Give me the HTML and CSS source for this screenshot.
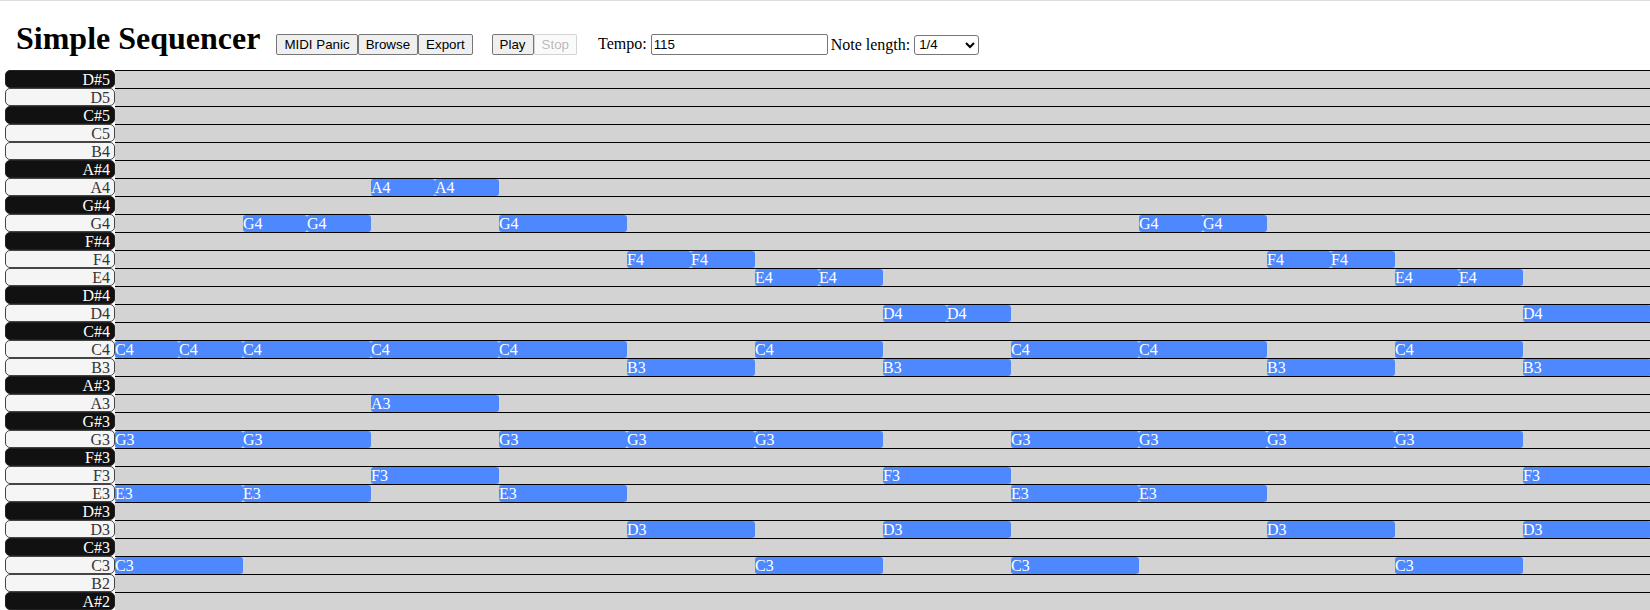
FILE: index.html
```html
<!DOCTYPE html>
<html lang="en">
<head>
<meta charset="utf-8">
<title>Simple Sequencer</title>
<link rel="stylesheet" href="styles.css">
</head>
<body>
<header class="topbar">
  <h1 class="title">Simple Sequencer</h1>
  <div class="btn-group">
    <button class="btn">MIDI Panic</button><button class="btn">Browse</button><button class="btn">Export</button>
  </div>
  <div class="btn-group transport">
    <button class="btn">Play</button><button class="btn" disabled>Stop</button>
  </div>
  <label class="field tempo">Tempo: <input class="text-input" type="text" value="115"></label>
  <label class="field length">Note length: <select class="select"><option>1/4</option><option>1/8</option><option>1/2</option></select></label>
</header>
<main class="roll">
  <div class="row"><div class="key black">D#5</div><div class="lane"></div></div>
  <div class="row"><div class="key">D5</div><div class="lane"></div></div>
  <div class="row"><div class="key black">C#5</div><div class="lane"></div></div>
  <div class="row"><div class="key">C5</div><div class="lane"></div></div>
  <div class="row"><div class="key">B4</div><div class="lane"></div></div>
  <div class="row"><div class="key black">A#4</div><div class="lane"></div></div>
  <div class="row"><div class="key">A4</div><div class="lane">
    <div class="note" style="--s:4;--l:1">A4</div>
    <div class="note" style="--s:5;--l:1">A4</div>
  </div></div>
  <div class="row"><div class="key black">G#4</div><div class="lane"></div></div>
  <div class="row"><div class="key">G4</div><div class="lane">
    <div class="note" style="--s:2;--l:1">G4</div>
    <div class="note" style="--s:3;--l:1">G4</div>
    <div class="note" style="--s:6;--l:2">G4</div>
    <div class="note" style="--s:16;--l:1">G4</div>
    <div class="note" style="--s:17;--l:1">G4</div>
  </div></div>
  <div class="row"><div class="key black">F#4</div><div class="lane"></div></div>
  <div class="row"><div class="key">F4</div><div class="lane">
    <div class="note" style="--s:8;--l:1">F4</div>
    <div class="note" style="--s:9;--l:1">F4</div>
    <div class="note" style="--s:18;--l:1">F4</div>
    <div class="note" style="--s:19;--l:1">F4</div>
  </div></div>
  <div class="row"><div class="key">E4</div><div class="lane">
    <div class="note" style="--s:10;--l:1">E4</div>
    <div class="note" style="--s:11;--l:1">E4</div>
    <div class="note" style="--s:20;--l:1">E4</div>
    <div class="note" style="--s:21;--l:1">E4</div>
  </div></div>
  <div class="row"><div class="key black">D#4</div><div class="lane"></div></div>
  <div class="row"><div class="key">D4</div><div class="lane">
    <div class="note" style="--s:12;--l:1">D4</div>
    <div class="note" style="--s:13;--l:1">D4</div>
    <div class="note" style="--s:22;--l:2">D4</div>
  </div></div>
  <div class="row"><div class="key black">C#4</div><div class="lane"></div></div>
  <div class="row"><div class="key">C4</div><div class="lane">
    <div class="note" style="--s:0;--l:1">C4</div>
    <div class="note" style="--s:1;--l:1">C4</div>
    <div class="note" style="--s:2;--l:2">C4</div>
    <div class="note" style="--s:4;--l:2">C4</div>
    <div class="note" style="--s:6;--l:2">C4</div>
    <div class="note" style="--s:10;--l:2">C4</div>
    <div class="note" style="--s:14;--l:2">C4</div>
    <div class="note" style="--s:16;--l:2">C4</div>
    <div class="note" style="--s:20;--l:2">C4</div>
  </div></div>
  <div class="row"><div class="key">B3</div><div class="lane">
    <div class="note" style="--s:8;--l:2">B3</div>
    <div class="note" style="--s:12;--l:2">B3</div>
    <div class="note" style="--s:18;--l:2">B3</div>
    <div class="note" style="--s:22;--l:2">B3</div>
  </div></div>
  <div class="row"><div class="key black">A#3</div><div class="lane"></div></div>
  <div class="row"><div class="key">A3</div><div class="lane">
    <div class="note" style="--s:4;--l:2">A3</div>
  </div></div>
  <div class="row"><div class="key black">G#3</div><div class="lane"></div></div>
  <div class="row"><div class="key">G3</div><div class="lane">
    <div class="note" style="--s:0;--l:2">G3</div>
    <div class="note" style="--s:2;--l:2">G3</div>
    <div class="note" style="--s:6;--l:2">G3</div>
    <div class="note" style="--s:8;--l:2">G3</div>
    <div class="note" style="--s:10;--l:2">G3</div>
    <div class="note" style="--s:14;--l:2">G3</div>
    <div class="note" style="--s:16;--l:2">G3</div>
    <div class="note" style="--s:18;--l:2">G3</div>
    <div class="note" style="--s:20;--l:2">G3</div>
  </div></div>
  <div class="row"><div class="key black">F#3</div><div class="lane"></div></div>
  <div class="row"><div class="key">F3</div><div class="lane">
    <div class="note" style="--s:4;--l:2">F3</div>
    <div class="note" style="--s:12;--l:2">F3</div>
    <div class="note" style="--s:22;--l:2">F3</div>
  </div></div>
  <div class="row"><div class="key">E3</div><div class="lane">
    <div class="note" style="--s:0;--l:2">E3</div>
    <div class="note" style="--s:2;--l:2">E3</div>
    <div class="note" style="--s:6;--l:2">E3</div>
    <div class="note" style="--s:14;--l:2">E3</div>
    <div class="note" style="--s:16;--l:2">E3</div>
  </div></div>
  <div class="row"><div class="key black">D#3</div><div class="lane"></div></div>
  <div class="row"><div class="key">D3</div><div class="lane">
    <div class="note" style="--s:8;--l:2">D3</div>
    <div class="note" style="--s:12;--l:2">D3</div>
    <div class="note" style="--s:18;--l:2">D3</div>
    <div class="note" style="--s:22;--l:2">D3</div>
  </div></div>
  <div class="row"><div class="key black">C#3</div><div class="lane"></div></div>
  <div class="row"><div class="key">C3</div><div class="lane">
    <div class="note" style="--s:0;--l:2">C3</div>
    <div class="note" style="--s:10;--l:2">C3</div>
    <div class="note" style="--s:14;--l:2">C3</div>
    <div class="note" style="--s:20;--l:2">C3</div>
  </div></div>
  <div class="row"><div class="key">B2</div><div class="lane"></div></div>
  <div class="row"><div class="key black">A#2</div><div class="lane"></div></div>
</main>
</body>
</html>
```
FILE: styles.css
```css
html {
  overflow: hidden;
}

body {
  margin: 0;
  background: #fff;
  color: #000;
  font-family: "Liberation Serif", "Times New Roman", serif;
  font-size: 16px;
}

.topbar {
  display: flex;
  align-items: baseline;
  height: 70px;
  box-sizing: border-box;
  border-top: 1px solid #dedede;
  padding: 19px 0 0 16px;
}

.title {
  margin: 0 16px 0 0;
  font-size: 32px;
  font-weight: bold;
}

.btn-group {
  display: flex;
  align-items: baseline;
}

.transport {
  margin-left: 19px;
}

.btn {
  margin: 0;
  height: 21px;
  box-sizing: border-box;
  padding: 1px 7px;
  border: 1px solid #767676;
  border-radius: 2px;
  background: #efefef;
  color: #000;
  font-family: "Liberation Sans", Arial, sans-serif;
  font-size: 13.333px;
}

.btn:disabled {
  color: rgba(16, 16, 16, 0.3);
  border-color: rgba(118, 118, 118, 0.3);
  background: rgba(239, 239, 239, 0.3);
}

.field {
  white-space: nowrap;
}

.tempo {
  margin-left: 21px;
}

.length {
  margin-left: 3px;
}

.text-input {
  margin: 0;
  width: 177px;
  height: 21px;
  box-sizing: border-box;
  padding: 1px 2px;
  border: 1px solid #767676;
  border-radius: 2px;
  font-family: "Liberation Sans", Arial, sans-serif;
  font-size: 13.333px;
  color: #000;
}

.select {
  margin: 0;
  width: 65px;
  height: 20px;
  box-sizing: border-box;
  border: 1px solid #767676;
  border-radius: 3px;
  background: #fff;
  color: #000;
  font-family: "Liberation Sans", Arial, sans-serif;
  font-size: 13.333px;
}

.roll {
  display: flex;
  flex-direction: column;
}

.row {
  display: flex;
  height: 18px;
  flex: none;
}

.key {
  flex: none;
  width: 110px;
  margin-left: 5px;
  box-sizing: border-box;
  border: 1px solid #444;
  border-radius: 5px;
  background: #f5f5f5;
  color: #333;
  text-align: right;
  padding-right: 4px;
  font-size: 16px;
  line-height: 17px;
  overflow: hidden;
}

.key.black {
  background: #111;
  border-color: #222;
  color: #fff;
}

.lane {
  flex: 1;
  position: relative;
  box-sizing: border-box;
  border-top: 1px solid #000;
  background: #d3d3d3;
  overflow: hidden;
}

.note {
  position: absolute;
  top: 0;
  left: calc(var(--s) * 64px);
  width: calc(var(--l) * 64px);
  height: 17px;
  border-radius: 3px;
  background: #4d88ff;
  color: #fff;
  font-size: 16px;
  line-height: 17px;
  white-space: nowrap;
  overflow: hidden;
}
```
